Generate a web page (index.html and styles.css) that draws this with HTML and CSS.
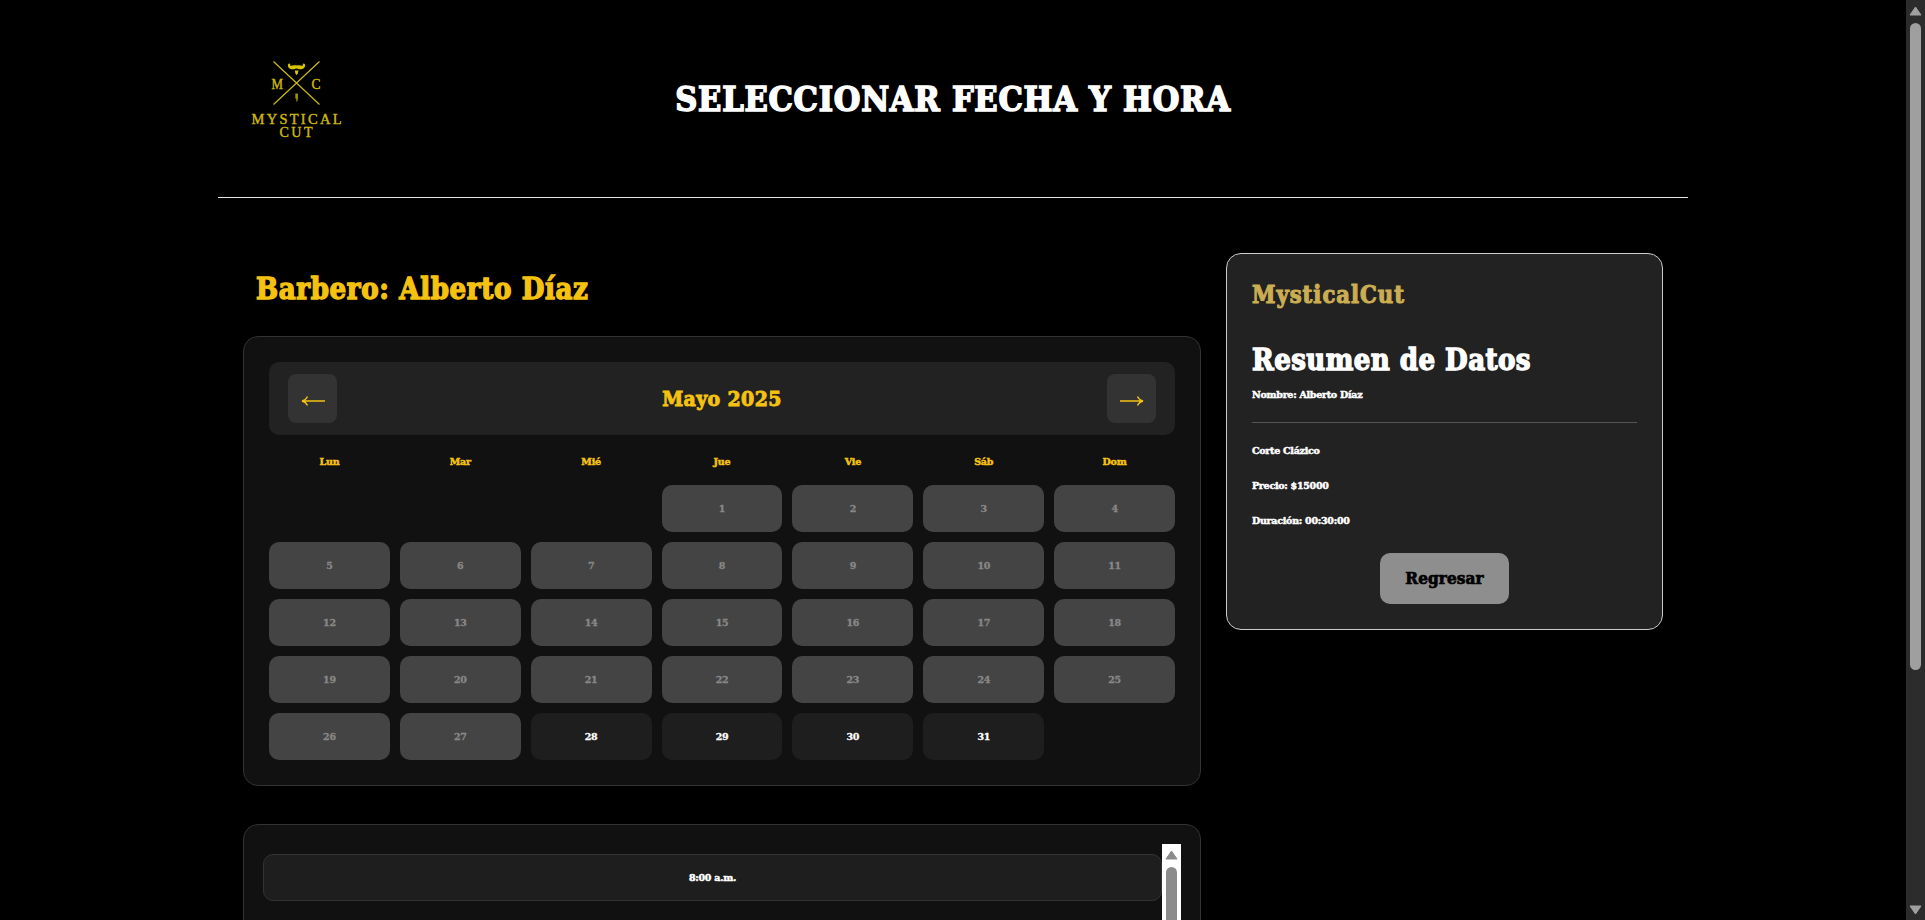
FILE: index.html
```
<!DOCTYPE html>
<html lang="es">
<head>
<meta charset="utf-8">
<title>Mystical Cut</title>
<link rel="stylesheet" href="styles.css">
</head>
<body>
<div class="page">
  <header class="header">
    <svg class="logo" viewBox="0 0 100 84" width="100" height="84">
      <g stroke="#cdb90f" stroke-width="1.2" fill="none"><path d="M26.500 4.500 72.500 47.500M72.500 4.500 26.500 47.500"/></g>
      <g fill="#d9c400"><path d="M41 7.500C42 5.800 44 6.800 43 8.200 44.500 9.500 46 7.800 49.500 8.500 53 7.800 54.500 9.500 56 8.200 55 6.800 57 5.800 58 7.500 58.500 10.500 56.500 12.300 53.500 12.300 51.500 12.300 50.500 11.500 49.500 11.500 48.500 11.500 47.500 12.300 45.500 12.300 42.500 12.300 40.500 10.500 41 7.500Z"/><path d="M47.800 13.500h3.600l-.6 3-1.200 1.800-1.200-1.800z"/><path d="M48.300 36.500h2.600v5.500l-.6 2.500h-1v-3h-1z" opacity=".75"/></g>
      <g class="logo-text">
        <text x="24.500" y="31.500" font-size="14.500" textLength="11.500" lengthAdjust="spacingAndGlyphs">M</text>
        <text x="64.500" y="31.500" font-size="14.500" textLength="9" lengthAdjust="spacingAndGlyphs">C</text>
        <text x="4.500" y="67" font-size="14.500" textLength="90">MYSTICAL</text>
        <text x="32.500" y="80.300" font-size="14" textLength="33">CUT</text>
      </g>
    </svg>
    <h1 class="title">SELECCIONAR FECHA Y HORA</h1>
  </header>
  <main class="main">
    <section class="booking">
      <h2 class="barber">Barbero: Alberto Díaz</h2>
      <div class="calendar">
        <div class="calendar-bar">
          <button class="nav"><svg width="24" height="12" viewBox="0 0 24 12"><path d="M24 6H2M6.500 1.500Q5 5 1 6 5 7 6.500 10.500"/></svg></button>
          <h3 class="month">Mayo 2025</h3>
          <button class="nav"><svg width="24" height="12" viewBox="0 0 24 12"><path d="M0 6H22M17.500 1.500Q19 5 23 6 19 7 17.500 10.500"/></svg></button>
        </div>
        <div class="weekdays"><span>Lun</span><span>Mar</span><span>Mié</span><span>Jue</span><span>Vie</span><span>Sáb</span><span>Dom</span></div>
        <div class="days">
          <span class="day first">1</span><span class="day">2</span><span class="day">3</span><span class="day">4</span>
          <span class="day">5</span><span class="day">6</span><span class="day">7</span><span class="day">8</span><span class="day">9</span><span class="day">10</span><span class="day">11</span>
          <span class="day">12</span><span class="day">13</span><span class="day">14</span><span class="day">15</span><span class="day">16</span><span class="day">17</span><span class="day">18</span>
          <span class="day">19</span><span class="day">20</span><span class="day">21</span><span class="day">22</span><span class="day">23</span><span class="day">24</span><span class="day">25</span>
          <span class="day">26</span><span class="day">27</span><span class="day open">28</span><span class="day open">29</span><span class="day open">30</span><span class="day open">31</span>
        </div>
      </div>
      <div class="slots">
        <div class="slot-list"><div class="slot">8:00 a.m.</div></div>
        <div class="bar bar-light"><svg width="13" height="10" viewBox="0 0 13 10"><path d="M6.500 1 12 9H1Z"/></svg><i class="thumb"></i></div>
      </div>
    </section>
    <aside class="summary">
      <h3 class="brand">MysticalCut</h3>
      <h2 class="summary-title">Resumen de Datos</h2>
      <p class="line name">Nombre: Alberto Díaz</p>
      <hr class="rule">
      <p class="line service">Corte Clázico</p>
      <p class="line price">Precio: $15000</p>
      <p class="line duration">Duración: 00:30:00</p>
      <button class="back">Regresar</button>
    </aside>
  </main>
</div>
<div class="bar bar-dark"><svg width="13" height="10" viewBox="0 0 13 10"><path d="M6.500 1 12 9H1Z"/></svg><i class="thumb"></i><svg class="down" width="13" height="10" viewBox="0 0 13 10"><path d="M6.500 9 12 1H1Z"/></svg></div>
</body>
</html>
```
FILE: styles.css
```
* { box-sizing: border-box; margin: 0; padding: 0; }
body {
  display: flex;
  height: 920px;
  overflow: hidden;
  background: #000;
  color: #fff;
  font-family: "DejaVu Serif", serif;
  font-weight: 700;
}
h1, h2, h3, p, .slot { white-space: nowrap; }
h1, h2, h3, .back { font-family: "DejaVu Serif Condensed", "DejaVu Serif", serif; }
button { border: 0; font: inherit; }
.page { flex: 1; height: 920px; overflow: hidden; padding: 0 218px; }
.header {
  display: grid;
  grid-template-columns: 1fr auto 1fr;
  align-items: center;
  height: 198px;
  padding: 0 29px;
  border-bottom: 1px solid #e4e4e4;
}
.logo-text { fill: #cdb90f; font-family: "Liberation Serif", serif; font-weight: 400; stroke: #cdb90f; stroke-width: .4px; }
.title { font-size: 34px; line-height: 40px; letter-spacing: .75px; -webkit-text-stroke: 1.5px; }
.main { display: flex; align-items: flex-start; gap: 25px; padding: 55px 25px 0; }
.booking { width: 958px; }
.barber { margin: 19px 0 30px 13px; font-size: 29px; line-height: 34px; color: #f5c211; letter-spacing: .65px; -webkit-text-stroke: 1.3px; }
.calendar { height: 450px; padding: 25px; background: #111; border: 1px solid #333; border-radius: 15px; }
.calendar-bar { display: flex; align-items: center; justify-content: space-between; height: 73px; padding: 0 19px; background: #222; border-radius: 10px; }
.nav { display: flex; align-items: center; justify-content: center; width: 49px; height: 49px; padding-top: 4px; background: #333; border-radius: 8px; }
.nav svg { fill: none; stroke: #f5c211; stroke-width: 1.3; }
.month { font-size: 21px; line-height: 26px; color: #f5c211; letter-spacing: .4px; -webkit-text-stroke: .9px; }
.weekdays, .days { display: grid; grid-template-columns: repeat(7, 1fr); gap: 10px; text-align: center; font-size: 9.500px; }
.weekdays { height: 50px; padding-top: 17px; line-height: 20px; color: #f5c211; letter-spacing: -.2px; -webkit-text-stroke: .5px; }
.day { height: 47px; line-height: 47px; background: #444; color: #888; border-radius: 10px; letter-spacing: -.3px; -webkit-text-stroke: .3px; }
.first { grid-column: 4; }
.open { background: #1e1e1e; color: #fff; }
.slots { display: flex; height: 300px; margin-top: 38px; padding: 19px; background: #111; border: 1px solid #333; border-radius: 15px; }
.slot-list { flex: 1; padding-top: 10px; }
.slot { height: 47px; line-height: 45px; text-align: center; font-size: 9.500px; background: #1e1e1e; border: 1px solid #333; border-radius: 10px; letter-spacing: -.25px; -webkit-text-stroke: .5px; }
.bar { display: flex; flex-direction: column; align-items: center; width: 19px; padding-top: 6px; }
.bar svg { stroke: currentColor; stroke-linejoin: round; }
.bar-light { background: #fff; fill: #8b8b8b; color: #8b8b8b; }
.bar-dark { background: #2c2c2c; fill: #9f9f9f; color: #9f9f9f; }
.thumb { flex: 1; width: 11px; margin-top: 7px; background: currentColor; border-radius: 6px; }
.bar-dark .thumb { flex: none; height: 647px; }
.down { margin-top: 235px; }
.summary { display: flex; flex-direction: column; align-items: flex-start; width: 437px; height: 377px; padding: 25px; background: #222; border: 1px solid #ccc; border-radius: 15px; }
.brand { margin-top: 2px; font-size: 23.500px; line-height: 28px; color: #cbad52; letter-spacing: 1px; -webkit-text-stroke: 1px; }
.summary-title { margin-top: 33px; font-size: 29px; line-height: 36px; letter-spacing: .45px; -webkit-text-stroke: 1.3px; }
.line { font-size: 9.500px; line-height: 20px; letter-spacing: -.27px; -webkit-text-stroke: .5px; }
.name { margin-top: 7px; }
.rule { width: 100%; margin-top: 17px; border: 0; border-top: 1px solid #555; }
.service { margin-top: 18px; }
.price, .duration { margin-top: 15px; }
.back { align-self: center; width: 129px; height: 51px; margin-top: 22px; padding-bottom: 2px; font: 700 17px "DejaVu Serif Condensed", "DejaVu Serif", serif; background: #8e8e8e; color: #000; border-radius: 10px; letter-spacing: .1px; -webkit-text-stroke: .7px; }
```
